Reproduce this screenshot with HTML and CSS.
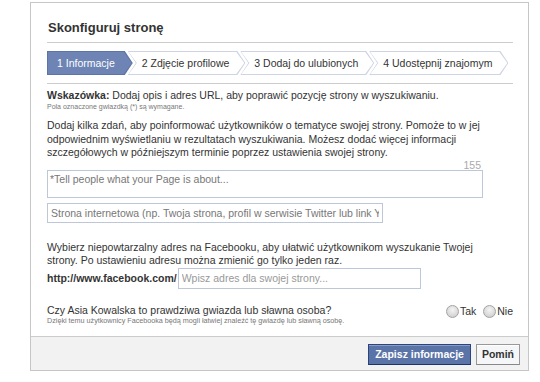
FILE: index.html
```html
<!DOCTYPE html>
<html lang="pl">
<head>
    <meta charset="UTF-8">
    <title>Skonfiguruj stronę</title>
    <link rel="stylesheet" href="styles.css">
</head>
<body>
    <!-- Okno konfiguracji strony -->
    <div class="dialog">
        <div class="dialog-body">
            <h2 class="title">Skonfiguruj stronę</h2>

            <!-- Kroki kreatora -->
            <ol class="steps">
                <li class="step step-first active"><span>1 Informacje</span></li>
                <li class="step"><span>2 Zdjęcie profilowe</span></li>
                <li class="step"><span>3 Dodaj do ulubionych</span></li>
                <li class="step"><span>4 Udostępnij znajomym</span></li>
            </ol>

            <p class="tip"><b>Wskazówka:</b> Dodaj opis i adres URL, aby poprawić pozycję strony w wyszukiwaniu.</p>
            <p class="note">Pola oznaczone gwiazdką (*) są wymagane.</p>

            <p class="text">Dodaj kilka zdań, aby poinformować użytkowników o tematyce swojej strony. Pomoże to w jej odpowiednim wyświetlaniu w rezultatach wyszukiwania. Możesz dodać więcej informacji szczegółowych w późniejszym terminie poprzez ustawienia swojej strony.</p>

            <div class="about-box">
                <div class="counter">155</div>
                <textarea class="about" placeholder="*Tell people what your Page is about..."></textarea>
            </div>
            <input class="website" type="text" placeholder="Strona internetowa (np. Twoja strona, profil w serwisie Twitter lub link Yelp)">

            <p class="text url-text">Wybierz niepowtarzalny adres na Facebooku, aby ułatwić użytkownikom wyszukanie Twojej strony. Po ustawieniu adresu można zmienić go tylko jeden raz.</p>
            <div class="url-row">
                <b>http://www.facebook.com/</b>
                <input class="url-input" type="text" placeholder="Wpisz adres dla swojej strony...">
            </div>

            <!-- Pytanie o osobę publiczną -->
            <div class="celeb">
                <div class="celeb-question">
                    <p class="question">Czy Asia Kowalska to prawdziwa gwiazda lub sławna osoba?</p>
                    <p class="note">Dzięki temu użytkownicy Facebooka będą mogli łatwiej znaleźć tę gwiazdę lub sławną osobę.</p>
                </div>
                <div class="radios">
                    <label class="radio-label"><span class="radio"></span>Tak</label>
                    <label class="radio-label"><span class="radio"></span>Nie</label>
                </div>
            </div>
        </div>

        <div class="dialog-footer">
            <button class="btn btn-primary" type="button">Zapisz informacje</button>
            <button class="btn" type="button">Pomiń</button>
        </div>
    </div>
</body>
</html>
```

FILE: styles.css
```css
/* Ogólne */
body {
    margin: 0;
    background: #fff;
    font-family: "Liberation Sans", Arial, sans-serif;
    font-size: 10.5px;
    color: #333;
}

p {
    margin: 0;
}

/* Okno */
.dialog {
    width: 497px;
    margin: 2px 0 0 30px;
    border: 1px solid #c6c6c6;
    background: #fff;
}

.dialog-body {
    padding: 0 15px 11px 16px;
}

.title {
    margin: 17px 0 0;
    padding: 0 0 6px 1px;
    font-size: 13px;
    line-height: 16px;
    font-weight: bold;
    color: #333;
    border-bottom: 1px solid #ccc;
}

/* Kroki */
.steps {
    display: flex;
    list-style: none;
    margin: 0;
    padding: 8px 0 8px;
    border-bottom: 1px solid #ccc;
}

.step {
    position: relative;
    height: 24px;
    display: flex;
    align-items: center;
    flex: none;
    white-space: nowrap;
    padding: 0 16px 0 14px;
    margin-left: -5px;
    color: #333;
    --shape: polygon(0 0, calc(100% - 8px) 0, 100% 50%, calc(100% - 8px) 100%, 0 100%, 8px 50%);
}

.step-first {
    margin-left: 0;
    padding: 0 18px 0 10px;
    --shape: polygon(0 0, calc(100% - 8px) 0, 100% 50%, calc(100% - 8px) 100%, 0 100%);
}

.step::before,
.step::after {
    content: "";
    position: absolute;
    clip-path: var(--shape);
}

.step::before {
    inset: 0;
    background: #cdd4e3;
}

.step::after {
    inset: 1px;
    background: #fff;
}

.step span {
    position: relative;
    z-index: 1;
}

.step.active {
    color: #fff;
}

.step.active::before {
    background: #5c74a8;
}

.step.active::after {
    background: #6d84b4;
}

/* Teksty */
.tip {
    margin-top: 4px;
    line-height: 14px;
}

.note {
    font-size: 7px;
    line-height: 10px;
    color: #777;
}

.text {
    max-width: 436px;
    margin-top: 7px;
    line-height: 13.5px;
}

.about-box {
    width: 436px;
}

.counter {
    padding-right: 2px;
    text-align: right;
    line-height: 10px;
    color: #aaa;
}

/* Pola */
textarea,
input {
    box-sizing: border-box;
    margin: 0;
    border: 1px solid #bdc7d8;
    font-family: inherit;
    font-size: 10.5px;
    color: #333;
    outline: none;
}

textarea::placeholder,
input::placeholder {
    color: #777;
    opacity: 1;
}

.about {
    display: block;
    width: 436px;
    height: 28px;
    padding: 2px 2px;
    resize: none;
    overflow: hidden;
}

.website {
    display: block;
    width: 336px;
    height: 20px;
    margin-top: 5px;
    padding: 0 3px;
}

.url-text {
    margin-top: 18px;
    line-height: 13px;
}

.url-row {
    display: flex;
    align-items: center;
    gap: 1px;
    margin-top: 1px;
}

.url-input {
    width: 243px;
    height: 21px;
    padding: 0 3px;
}

.url-input::placeholder {
    color: #999;
}

/* Gwiazda / osoba publiczna */
.celeb {
    display: flex;
    justify-content: space-between;
    margin-top: 15px;
}

.question {
    line-height: 13px;
}

.celeb .note {
    font-size: 7.2px;
    line-height: 8px;
}

.radios {
    display: flex;
    gap: 7px;
    height: 13px;
    margin-top: 1px;
}

.radio-label {
    display: flex;
    align-items: center;
    gap: 1px;
}

.radio {
    width: 11px;
    height: 11px;
    border-radius: 50%;
    border: 1px solid #a3a3a3;
    background: radial-gradient(circle at 50% 35%, #f4f4f4, #c8c8c8);
}

/* Stopka */
.dialog-footer {
    display: flex;
    justify-content: flex-end;
    gap: 5px;
    padding: 7px 8px 5px;
    background: #f2f2f2;
    border-top: 1px solid #ccc;
}

.btn {
    height: 21px;
    padding: 0 5px;
    border: 1px solid #999;
    border-bottom-color: #888;
    background: #f5f6f7;
    font-family: inherit;
    font-size: 10.5px;
    font-weight: bold;
    color: #333;
    box-shadow: inset 0 1px 0 #fff;
}

.btn-primary {
    background: #5b74a8;
    border-color: #29447e #29447e #1a356e;
    color: #fff;
    box-shadow: inset 0 1px 0 #8a9cc2;
    padding: 0 6px;
}
```
